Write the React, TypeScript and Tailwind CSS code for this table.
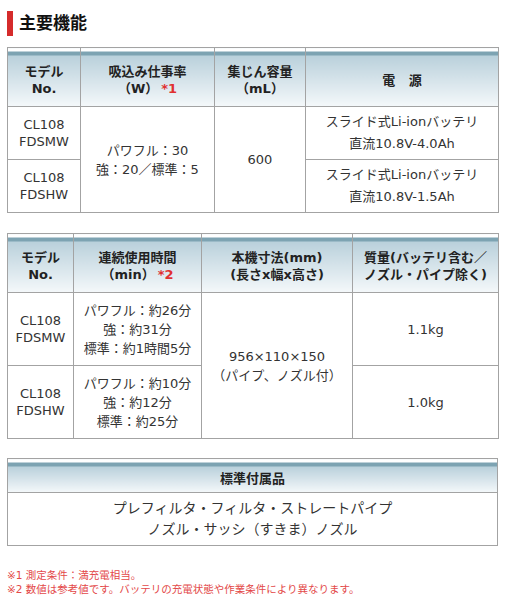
import React from "react";

const font = { fontFamily: '"DejaVu Sans", "Noto Sans CJK JP", sans-serif' };

const th =
  "border border-[#a3a3a3] text-center align-middle font-bold text-[13px] leading-[17px] text-[#222] bg-[linear-gradient(to_bottom,#ffffff_0px,#ffffff_3px,#7da3b2_3px,#7da3b2_7px,#b9d0db_7px,#f4f8fa_100%)] pt-[6px]";
const td = "border border-[#a3a3a3] text-center align-middle text-[13px] leading-[19px] text-[#333]";
const tdModel = "border border-[#a3a3a3] text-center align-middle text-[13px] leading-[17px] text-[#333]";

export default function App() {
  return (
    <div className="w-[505px] h-[598px] bg-white pl-[7px] pr-[7px]" style={font}>
      <div className="pt-[11px] flex items-center h-[36px]">
        <div className="w-[6px] h-[25px] bg-[#d52b2b]" />
        <div className="ml-[6px] text-[17px] font-bold text-[#111] leading-[25px]">主要機能</div>
      </div>

      <table className="mt-[11px] w-[491px] border-collapse table-fixed">
        <colgroup>
          <col className="w-[73px]" />
          <col className="w-[134px]" />
          <col className="w-[91px]" />
          <col className="w-[193px]" />
        </colgroup>
        <thead>
          <tr className="h-[59px]">
            <th className={th}>モデル<br />No.</th>
            <th className={th}>
              吸込み仕事率
              <br />
              （W）<span className="text-[#e03030] ml-[3px]">*1</span>
            </th>
            <th className={th}>集じん容量<br />（mL）</th>
            <th className={th}>電&nbsp;&nbsp;&nbsp;源</th>
          </tr>
        </thead>
        <tbody>
          <tr className="h-[53px]">
            <td className={tdModel}>CL108<br />FDSMW</td>
            <td className={td} rowSpan={2}>パワフル：30<br />強：20／標準：5</td>
            <td className={td} rowSpan={2}>600</td>
            <td className={`${td} leading-[22px]`}>スライド式Li-ionバッテリ<br />直流10.8V-4.0Ah</td>
          </tr>
          <tr className="h-[53px]">
            <td className={tdModel}>CL108<br />FDSHW</td>
            <td className={`${td} leading-[22px]`}>スライド式Li-ionバッテリ<br />直流10.8V-1.5Ah</td>
          </tr>
        </tbody>
      </table>

      <table className="mt-[20px] w-[491px] border-collapse table-fixed">
        <colgroup>
          <col className="w-[66px]" />
          <col className="w-[128px]" />
          <col className="w-[151px]" />
          <col className="w-[146px]" />
        </colgroup>
        <thead>
          <tr className="h-[59px]">
            <th className={th}>モデル<br />No.</th>
            <th className={th}>
              連続使用時間
              <br />
              （min）<span className="text-[#e03030] ml-[3px]">*2</span>
            </th>
            <th className={th}>本機寸法(mm)<br />(長さx幅x高さ)</th>
            <th className={th}>質量(バッテリ含む／<br />ノズル・パイプ除く)</th>
          </tr>
        </thead>
        <tbody>
          <tr className="h-[73px]">
            <td className={tdModel}>CL108<br />FDSMW</td>
            <td className={td}>パワフル：約26分<br />強：約31分<br />標準：約1時間5分</td>
            <td className={td} rowSpan={2}>956×110×150<br />（パイプ、ノズル付）</td>
            <td className={td}>1.1kg</td>
          </tr>
          <tr className="h-[73px]">
            <td className={tdModel}>CL108<br />FDSHW</td>
            <td className={td}>パワフル：約10分<br />強：約12分<br />標準：約25分</td>
            <td className={td}>1.0kg</td>
          </tr>
        </tbody>
      </table>

      <table className="mt-[19px] w-[491px] border-collapse table-fixed">
        <thead>
          <tr className="h-[34px]">
            <th className={th}>標準付属品</th>
          </tr>
        </thead>
        <tbody>
          <tr className="h-[53px]">
            <td className={`${td} text-[14px] leading-[21px] text-[#222]`}>
              プレフィルタ・フィルタ・ストレートパイプ
              <br />
              ノズル・サッシ（すきま）ノズル
            </td>
          </tr>
        </tbody>
      </table>

      <div className="mt-[22px] text-[10.5px] leading-[14px] text-[#e34848]">
        <div>※1 測定条件：満充電相当。</div>
        <div>※2 数値は参考値です。バッテリの充電状態や作業条件により異なります。</div>
      </div>
    </div>
  );
}
